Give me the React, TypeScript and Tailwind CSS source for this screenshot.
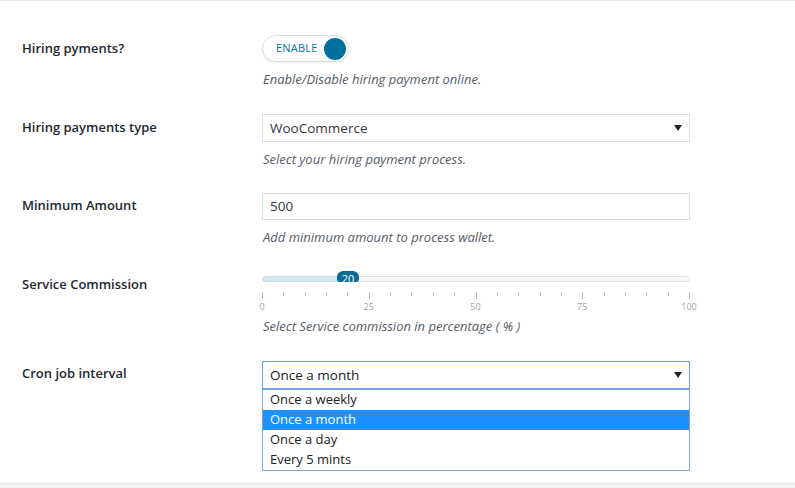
import React from "react";

const font = { fontFamily: '"Open Sans", "Noto Sans", Arial, sans-serif' };

function Arrow() {
  return (
    <svg width="8" height="7" viewBox="0 0 8 7" className="absolute right-[7px] top-1/2 -translate-y-1/2">
      <path d="M0 0.5 H8 L4 6.5 Z" fill="#222" />
    </svg>
  );
}

function Label({ children, top }: { children: React.ReactNode; top: string }) {
  return (
    <div className={`w-[240px] shrink-0 ${top} text-[13px] leading-5 font-semibold text-[#23282d]`}>
      {children}
    </div>
  );
}

function Desc({ children }: { children: React.ReactNode }) {
  return <p className="mt-[7px] pl-px text-[13px] leading-5 italic text-[#555d66]">{children}</p>;
}

export default function App() {
  const ticks = Array.from({ length: 21 }, (_, i) => i);
  const options = ["Once a weekly", "Once a month", "Once a day", "Every 5 mints"];

  return (
    <div style={font} className="flex h-[488px] w-[795px] flex-col overflow-hidden bg-white">
      <div className="flex-1 border-t border-[#e8e8e8] pl-[22px] pt-[19px]">
        {/* Hiring payments */}
        <div className="flex h-[79px]">
          <Label top="pt-[18px]">Hiring pyments?</Label>
          <div className="w-[428px] pt-[15px]">
            <div className="flex h-[27px] w-[87px] items-center justify-between rounded-full border border-[#dcdcdc] bg-white pl-[13px] pr-[2px] shadow-[0_1px_2px_rgba(0,0,0,0.06)]">
              <span className="text-[11px] tracking-[0.2px] text-[#0073aa]">ENABLE</span>
              <span className="h-[22px] w-[22px] rounded-full bg-[#00709e]" />
            </div>
            <Desc>Enable/Disable hiring payment online.</Desc>
          </div>
        </div>

        {/* Payment type */}
        <div className="flex h-[79px]">
          <Label top="pt-[18px]">Hiring payments type</Label>
          <div className="w-[428px] pt-[15px]">
            <div className="relative flex h-[28px] items-center border border-[#dddddd] bg-white pl-[7px] text-[13.5px] text-[#32373c]">
              WooCommerce
              <Arrow />
            </div>
            <Desc>Select your hiring payment process.</Desc>
          </div>
        </div>

        {/* Minimum amount */}
        <div className="flex h-[79px]">
          <Label top="pt-[17px]">Minimum Amount</Label>
          <div className="w-[428px] pt-[15px]">
            <div className="flex h-[27px] items-center border border-[#dddddd] bg-white pl-[7px] text-[13.5px] text-[#32373c]">
              500
            </div>
            <Desc>Add minimum amount to process wallet.</Desc>
          </div>
        </div>

        {/* Service commission */}
        <div className="flex h-[89px]">
          <Label top="pt-[17px]">Service Commission</Label>
          <div className="w-[428px] pt-[14px]">
            <div className="relative h-[11px]">
              <div className="absolute left-0 right-0 top-[5px] h-[6px] rounded-full border border-[#e1e1e1] bg-[#f7f7f7]" />
              <div className="absolute left-0 top-[5px] h-[6px] w-[86px] rounded-full border border-[#c9dfe8] bg-[#d5e7ee]" />
              <div className="absolute left-[75px] top-0 flex h-[11px] w-[22px] justify-center overflow-hidden rounded-t-[6px] rounded-b-[3px] bg-[#0b6b96]">
                <span className="mt-[1px] text-[11px] leading-[13px] text-white">20</span>
              </div>
            </div>
            <div className="relative mt-[10px] h-[7px]">
              {ticks.map((i) => (
                <span
                  key={i}
                  className={`absolute top-0 w-px ${i % 5 === 0 ? "h-[7px] bg-[#9fc4de]" : "h-[4px] bg-[#c4c4c4]"}`}
                  style={{ left: `${(i * 427) / 20}px` }}
                />
              ))}
            </div>
            <div className="relative h-[16px] text-[9px] leading-[16px] text-[#a9a39c]">
              {[0, 25, 50, 75, 100].map((v, i) => (
                <span key={v} className="absolute top-0 -translate-x-1/2" style={{ left: `${(i * 427) / 4}px` }}>
                  {v}
                </span>
              ))}
            </div>
            <p className="mt-[1px] pl-px text-[13px] leading-5 italic text-[#555d66]">
              Select Service commission in percentage ( % )
            </p>
          </div>
        </div>

        {/* Cron job */}
        <div className="flex">
          <Label top="pt-[17px]">Cron job interval</Label>
          <div className="relative w-[428px] pt-[15px]">
            <div className="relative flex h-[28px] items-center border border-[#6fa2db] bg-white pl-[7px] text-[13.5px] text-[#222]">
              Once a month
              <Arrow />
            </div>
            <div className="absolute left-0 right-0 top-[43px] border border-[#7ea6dc] bg-white">
              {options.map((o) => (
                <div
                  key={o}
                  className={`flex h-[20px] items-center pl-[7px] text-[13px] ${
                    o === "Once a month" ? "bg-[#1e90ff] text-white" : "text-[#222]"
                  }`}
                >
                  {o}
                </div>
              ))}
            </div>
          </div>
        </div>
      </div>
      <div className="h-[5px] border-t border-[#e2e2e2] bg-[#f3f3f3]" />
    </div>
  );
}
